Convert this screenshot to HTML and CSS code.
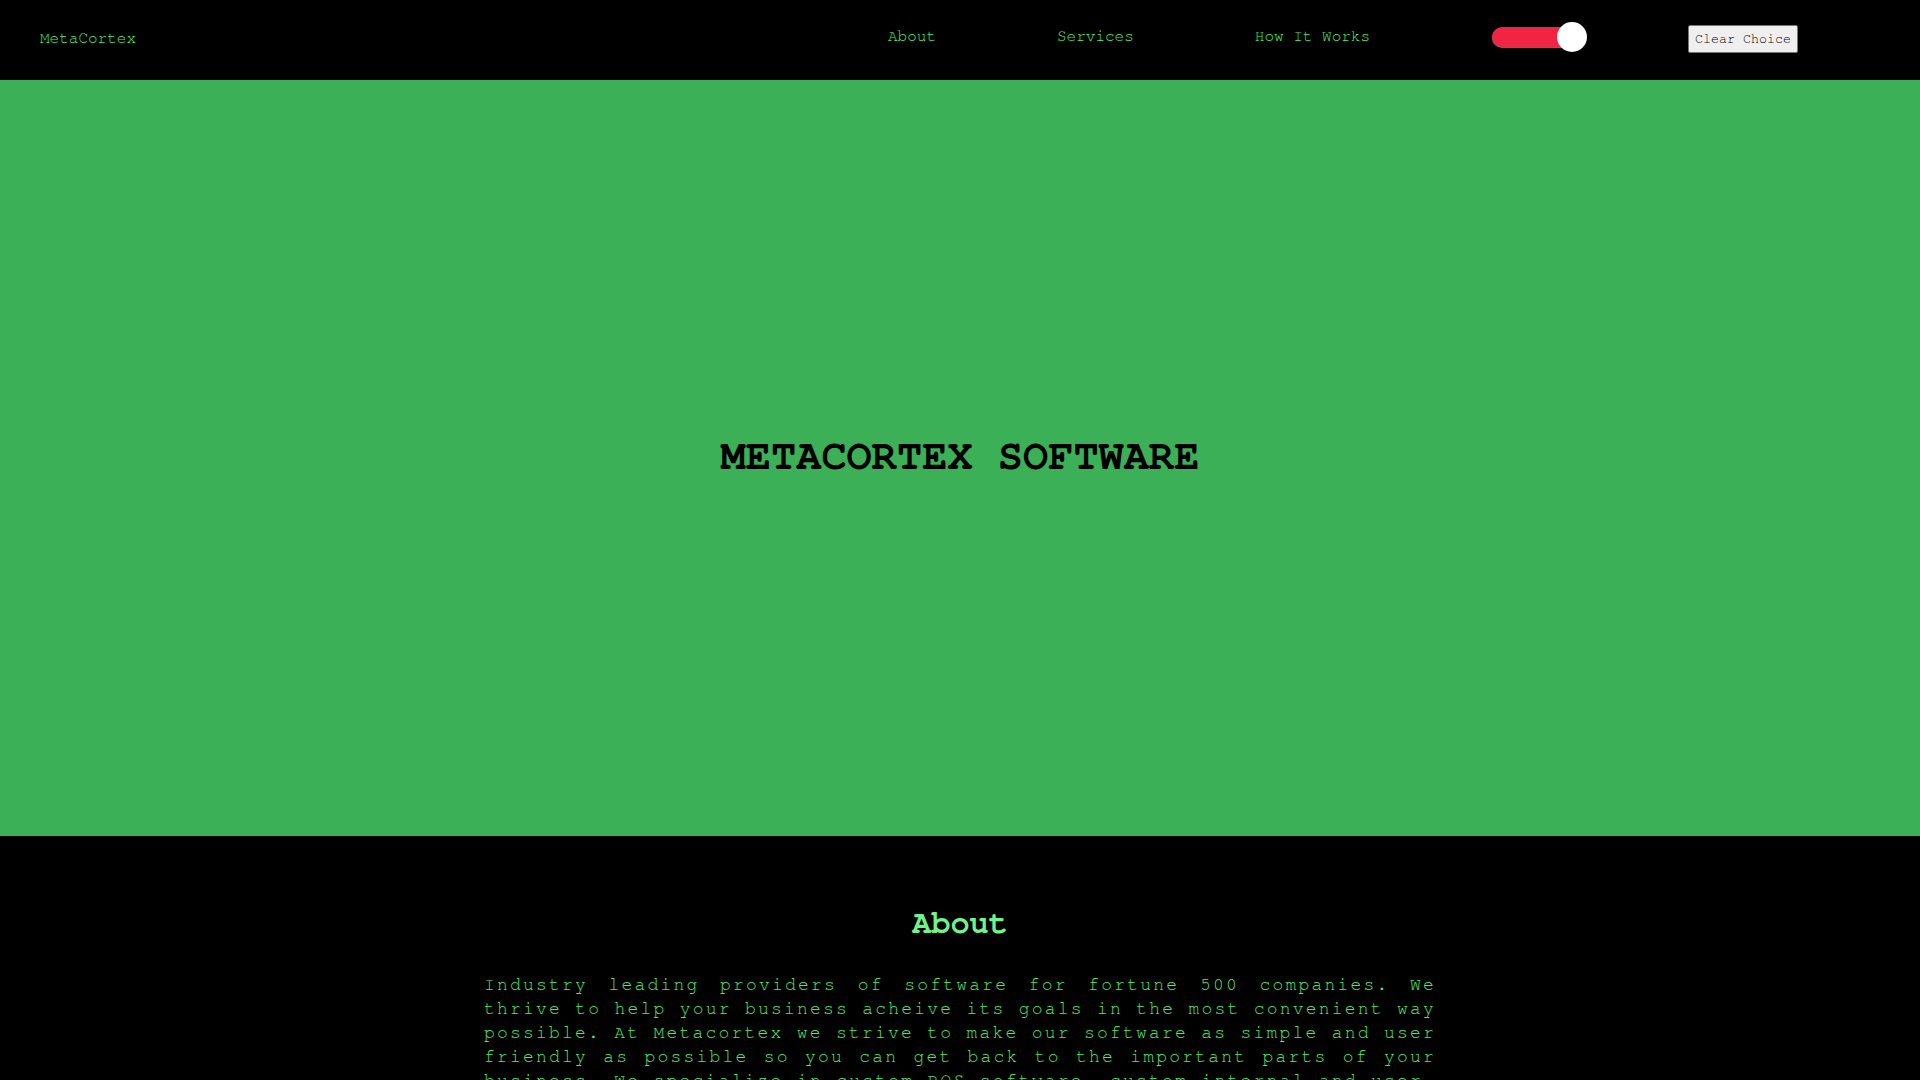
FILE: index.html
```html
<!DOCTYPE html>
<html lang="en">
<head>
<meta charset="utf-8">
<title>MetaCortex</title>
<link rel="stylesheet" href="styles.css">
</head>
<body>
<nav class="nav">
  <a class="logo" href="#">MetaCortex</a>
  <ul class="links">
    <li><a href="#about">About</a></li>
    <li><a href="#services">Services</a></li>
    <li><a href="#how">How It Works</a></li>
  </ul>
  <label class="toggle">
    <span class="track"></span>
    <span class="knob"></span>
  </label>
  <button class="clear">Clear Choice</button>
</nav>
<header class="hero">
  <h1 class="hero-title">METACORTEX SOFTWARE</h1>
</header>
<section class="about" id="about">
  <h2 class="about-title">About</h2>
  <p class="about-text">Industry leading providers of software for fortune 500 companies. We thrive to help your business acheive its goals in the most convenient way possible. At Metacortex we strive to make our software as simple and user friendly as possible so you can get back to the important parts of your business. We specialize in custom POS software, custom internal and user-facing applications, and everything in between. Our team works with you from the first idea to the final release.</p>
</section>
</body>
</html>
```
FILE: styles.css
```css
* { box-sizing: border-box; }
html, body { margin: 0; padding: 0; }
body {
  background: #000;
  font-family: "Nimbus Mono PS", "Nimbus Mono L", "FreeMono", "Courier 10 Pitch", "Courier New", Courier, "Liberation Mono", monospace;
  color: #52eb6c;
}
.nav {
  height: 80px;
  background: #000;
  display: flex;
  align-items: center;
  padding: 0 122px 6px 40px;
}
.logo {
  color: #52eb6c;
  text-decoration: none;
  font-size: 16px;
  margin-top: 2px;
}
.links {
  list-style: none;
  display: flex;
  gap: 121px;
  margin: 0 0 3px auto;
  padding: 0;
}
.links a {
  color: #52eb6c;
  text-decoration: none;
  font-size: 16px;
}
.toggle {
  position: relative;
  display: block;
  width: 95px;
  height: 30px;
  margin-left: 122px;
  margin-bottom: 0;
}
.track {
  display: block;
  width: 86px;
  height: 20px;
  margin-top: 5px;
  border-radius: 10px;
  background: #f22443;
  box-shadow: 0 1px 1px #777;
}
.knob {
  position: absolute;
  right: 0;
  top: 0;
  width: 30px;
  height: 30px;
  border-radius: 50%;
  background: #fff;
}
.clear {
  margin-left: 101px;
  margin-top: 4px;
  font-family: inherit;
  font-size: 13.33px;
  line-height: 14px;
  padding: 6px 6px;
  background: #efefef;
  color: #000;
  border: 1px solid #767676;
  border-radius: 2px;
}
.hero {
  height: 756px;
  background: #3bb057;
  display: flex;
  align-items: center;
  justify-content: center;
  padding-bottom: 5px;
}
.hero-title {
  margin: 0;
  font-size: 42px;
  font-weight: bold;
  color: #000;
}
.about {
  padding: 69px 0 40px;
  display: flex;
  flex-direction: column;
  align-items: center;
}
.about-title {
  margin: 0;
  font-size: 32px;
  font-weight: bold;
  color: #72f28a;
  line-height: 36px;
}
.about-text {
  width: 952px;
  margin: 32px 0 0;
  font-size: 18px;
  line-height: 24px;
  letter-spacing: 2.2px;
  text-align: justify;
  color: #52eb6c;
}
```
